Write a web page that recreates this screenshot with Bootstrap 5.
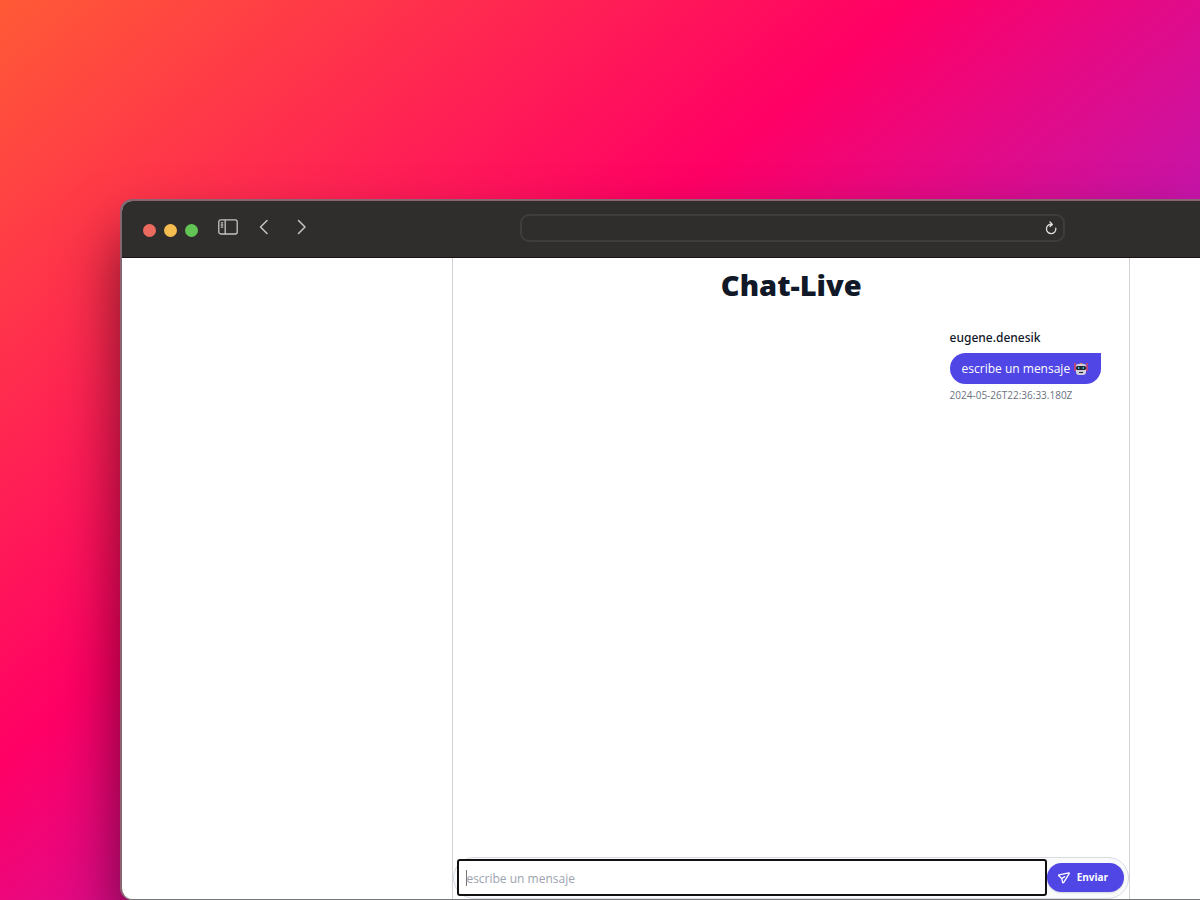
<!DOCTYPE html>
<html lang="es">
<head>
<meta charset="utf-8">
<meta name="viewport" content="width=device-width, initial-scale=1">
<title>Chat-Live</title>
<link href="https://cdn.jsdelivr.net/npm/bootstrap@5.3.0/dist/css/bootstrap.min.css" rel="stylesheet">
<style>
  body {
    font-family: "Open Sans", "Noto Sans", sans-serif;
    min-height: 100vh;
    padding: 199px 0 0 120px;
    background: linear-gradient(140deg, #ff5a36 0, #ff0065 40%, #7b2eff 93%);
  }
  .browser-window {
    min-height: calc(100vh - 199px);
    border: 2px solid #8a6470;
    border-bottom: 1px solid #77787c;
    border-right: 0;
    border-radius: 12px 0 0 12px;
    background: #fff;
    box-shadow: 0 36px 60px rgba(0, 0, 0, .55);
  }
  .toolbar { height: 57px; background: #2f2e2c; border-bottom: 1px solid #1c1010; border-radius: 10px 0 0 0; padding: 0 0 2px 21px; }
  /* The window continues past the right edge, so its centre sits right of the middle */
  .toolbar-start { flex: 378 1 0; }
  .toolbar-end { flex: 135 1 0; }
  .page-start { flex: 331 1 0; }
  .page-end { flex: 70 1 0; }
  .light { width: 13px; height: 13px; border-radius: 50%; }
  .light-close { background: #ed6a5e; }
  .light-min { background: #f5bd4f; }
  .light-max { background: #61c454; }
  .tool-btn { border: 0; padding: 0; background: none; color: #c4c4c3; line-height: 0; }
  .nav-tools { gap: 21px; margin-left: 20px; padding-bottom: 2px; }
  .nav-arrows { gap: 28px; }
  .address { flex: 536 1 0; height: 28px; border: 2px solid #3e3d3b; border-radius: 9px; padding-right: 6px; }
  .address input { background: none; border: 0; outline: 0; color: #ddd; min-width: 0; }
  .chat-panel { flex: 677 1 0; border: solid #d1d3d6; border-width: 0 1px; }
  .chat-title { font-size: 29px; line-height: 38px; font-weight: 800; color: #111827; padding-top: 8px; }
  .message { padding: 24px 28px 0 0; }
  .author { font-family: "Noto Sans", sans-serif; font-size: 12px; line-height: 20px; font-weight: 500; color: #111827; }
  .bubble { background: #4f46e5; color: #fff; font-size: 12px; line-height: 19px; padding: 6px 13px 6px 12px; border-radius: 16px 0 16px 16px; margin-top: 5px; }
  .stamp { font-size: 10px; line-height: 16px; color: #6b7280; margin-top: 3px; }
  .composer { height: 42px; border: 1px solid #d8dbe2; border-radius: 21px; background: #f9fafc; padding: 1px 4px 2px 3px; }
  .composer input {
    min-width: 0; height: 37px; border: 2px solid #111; border-radius: 3px; outline: 0; font-size: 12px; padding: 3px 7px 1px; color: #111827;
    background: linear-gradient(#777, #777) 7px 9px / 1px 16px no-repeat #fff;
  }
  .composer input::placeholder { color: #9ca3af; opacity: 1; }
  .send { gap: 7px; height: 29px; border: 0; border-radius: 15px; background: #4f46e5; color: #fff; font-size: 10px; font-weight: 700; padding: 0 16px 0 11px; box-shadow: 0 1px 2px rgba(0, 0, 0, .15); }
</style>
</head>
<body class="overflow-hidden">
<div class="browser-window d-flex flex-column">
  <header class="toolbar d-flex align-items-center flex-shrink-0">
    <div class="toolbar-start d-flex align-items-center">
      <div class="d-flex gap-2 pt-1">
        <span class="light light-close"></span>
        <span class="light light-min"></span>
        <span class="light light-max"></span>
      </div>
      <div class="nav-tools d-flex align-items-center">
        <button type="button" class="tool-btn" aria-label="Barra lateral">
          <svg width="20" height="16" viewBox="0 0 20 16" fill="none" stroke="currentColor" stroke-width="1.3"><rect x=".8" y=".8" width="18.4" height="14.2" rx="2"/><path d="M7.2 1v14M2.8 3.8h2.4M2.8 6h2.4M2.8 8.2h2.4"/></svg>
        </button>
        <div class="nav-arrows d-flex">
          <button type="button" class="tool-btn" aria-label="Atrás">
            <svg width="10" height="16" viewBox="0 0 10 16" fill="none" stroke="currentColor" stroke-width="1.5" stroke-linecap="round" stroke-linejoin="round"><path d="M8 1.5 1.5 8 8 14.5"/></svg>
          </button>
          <button type="button" class="tool-btn" aria-label="Adelante">
            <svg width="10" height="16" viewBox="0 0 10 16" fill="none" stroke="currentColor" stroke-width="1.5" stroke-linecap="round" stroke-linejoin="round"><path d="M1.5 1.5 8 8 1.5 14.5"/></svg>
          </button>
        </div>
      </div>
    </div>
    <div class="address d-flex align-items-center">
      <input type="text" class="flex-grow-1" aria-label="Dirección">
      <button type="button" class="tool-btn" aria-label="Recargar">
        <svg width="12" height="14" viewBox="0 0 12 14" fill="none" stroke="#e0e0df" stroke-width="1.3" stroke-linecap="round" stroke-linejoin="round"><path d="M10.8 7.2A4.7 4.7 0 1 1 6.8 3.3M5 1l2.4 2.4L5 5.6"/></svg>
      </button>
    </div>
    <div class="toolbar-end"></div>
  </header>
  <div class="flex-grow-1 d-flex">
    <div class="page-start"></div>
    <main class="chat-panel d-flex flex-column">
      <h1 class="chat-title text-center mb-0">Chat-Live</h1>
      <section class="message flex-grow-1 d-flex flex-column align-items-end">
        <div>
          <div class="author">eugene.denesik</div>
          <div class="bubble d-flex align-items-center gap-1">
            <span>escribe un mensaje</span>
            <svg width="14" height="14" viewBox="0 0 14 14" role="img" aria-label="Robot"><path d="M1 1v8M13 1v8" stroke="#e3455c" stroke-width="1.4"/><path d="M4.5 2.5Q7-.6 9.5 2.5z" fill="#f9a13a"/><path d="M2 4q0-2 2-2h6q2 0 2 2v6q0 3-3 3H5q-3 0-3-3z" fill="#d2d0dc"/><rect x="2" y="4" width="10" height="4" rx="1.6" fill="#24252f"/><circle cx="4.8" cy="6" r=".9" fill="#36bde8"/><circle cx="9.2" cy="6" r=".9" fill="#36bde8"/><path d="M5 10.5h4" stroke="#343241" stroke-width="1.2"/></svg>
          </div>
          <time class="stamp d-block">2024-05-26T22:36:33.180Z</time>
        </div>
      </section>
      <form class="composer d-flex align-items-center">
        <input type="text" class="flex-grow-1" placeholder="escribe un mensaje" aria-label="Mensaje">
        <button type="button" class="send d-flex align-items-center">
          <svg width="12" height="12" viewBox="0 0 12 12" fill="none" stroke="currentColor" stroke-width="1.3" stroke-linecap="round" stroke-linejoin="round"><path d="M11 .8 1 2.8q-.8.3-.2.9l3 2.9.8 3.8q.4.8 1 .2L11.2 1.6q.2-.7-.2-.8zM3.8 6.6l2.8-2"/></svg>
          <span>Enviar</span>
        </button>
      </form>
    </main>
    <div class="page-end"></div>
  </div>
</div>
<script src="https://cdn.jsdelivr.net/npm/bootstrap@5.3.0/dist/js/bootstrap.bundle.min.js"></script>
</body>
</html>
